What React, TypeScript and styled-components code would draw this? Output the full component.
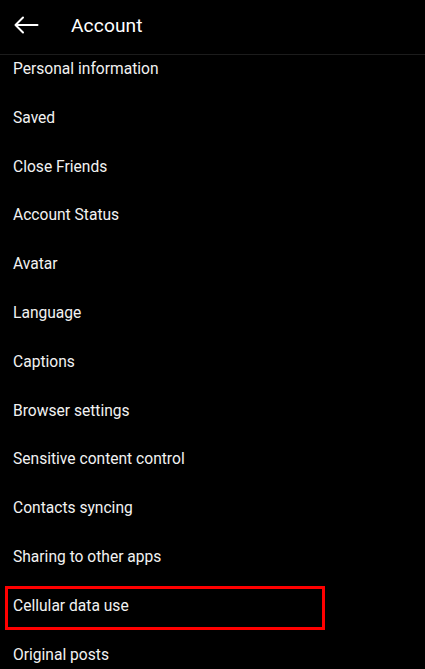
import React from "react";
import styled, { createGlobalStyle } from "styled-components";

const Global = createGlobalStyle`
  html, body {
    margin: 0;
    padding: 0;
    background: #000;
  }
  body {
    font-family: "Roboto", "Noto Sans", "Liberation Sans", sans-serif;
    color: #f5f5f5;
    -webkit-font-smoothing: antialiased;
  }
`;

const Screen = styled.div`
  width: 425px;
  height: 669px;
  background: #000;
  overflow: hidden;
  display: flex;
  flex-direction: column;
`;

const Header = styled.header`
  flex: none;
  display: flex;
  align-items: center;
  border-bottom: 1px solid #1c1c1c;
  box-sizing: border-box;
  height: 55px;
  padding: 0 0 4px 13px;
`;

const BackButton = styled.button`
  width: 26px;
  height: 26px;
  padding: 0;
  margin: 0;
  border: 0;
  background: transparent;
  color: #fff;
  display: flex;
  align-items: center;
  justify-content: center;
`;

const Title = styled.h1`
  margin: 0 0 0 32px;
  font-size: 19.2px;
  font-weight: 400;
  color: #fff;
  letter-spacing: 0.1px;
`;

const List = styled.ul`
  list-style: none;
  margin: 0;
  padding: 0;
  display: flex;
  flex-direction: column;
`;

const Row = styled.li<{ $highlight?: boolean }>`
  position: relative;
  height: 48.8px;
  flex: none;
  box-sizing: border-box;
  padding: 5px 0 0 13px;
  font-size: 15.6px;
  line-height: 18px;
  color: #f2f2f2;
  ${(p) =>
    p.$highlight &&
    `
    &::after {
      content: "";
      position: absolute;
      left: 5px;
      top: -6px;
      width: 320px;
      height: 44px;
      box-sizing: border-box;
      border: 3px solid #ff0000;
    }
  `}
`;

const items = [
  "Personal information",
  "Saved",
  "Close Friends",
  "Account Status",
  "Avatar",
  "Language",
  "Captions",
  "Browser settings",
  "Sensitive content control",
  "Contacts syncing",
  "Sharing to other apps",
  "Cellular data use",
  "Original posts",
];

export default function App() {
  return (
    <>
      <Global />
      <Screen>
        <Header>
          <BackButton aria-label="Back">
            <svg width="26" height="18" viewBox="0 0 26 18" fill="none">
              <path
                d="M24.5 9H2.5M10 1.5L2.5 9L10 16.5"
                stroke="#fff"
                strokeWidth="2"
                strokeLinecap="round"
                strokeLinejoin="round"
              />
            </svg>
          </BackButton>
          <Title>Account</Title>
        </Header>
        <List>
          {items.map((t) => (
            <Row key={t} $highlight={t === "Cellular data use"}>
              {t}
            </Row>
          ))}
        </List>
      </Screen>
    </>
  );
}
